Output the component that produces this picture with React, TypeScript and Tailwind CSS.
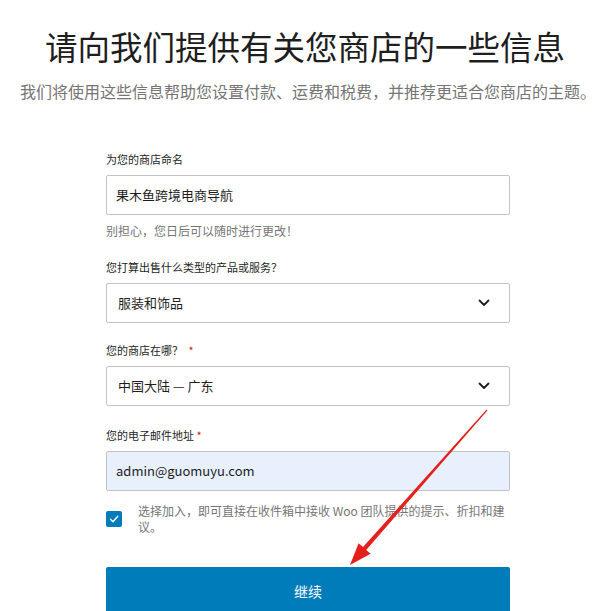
import React from "react";

const Chevron = () => (
  <svg width="12" height="8" viewBox="0 0 12 8" fill="none">
    <path d="M1.5 1.5 L6 6 L10.5 1.5" stroke="#1e1e1e" strokeWidth="1.8" strokeLinecap="round" strokeLinejoin="round" />
  </svg>
);

export default function App() {
  return (
    <div
      className="relative w-[608px] h-[611px] overflow-hidden bg-white"
      style={{ fontFamily: '"Noto Sans CJK SC", "Noto Sans", sans-serif' }}
    >
      <div className="flex flex-col items-center pt-[26px] pl-[8px]">
        <h1 className="text-[32.5px] leading-[40px] font-normal text-[#1e1e1e] whitespace-nowrap -ml-[6px]">
          请向我们提供有关您商店的一些信息
        </h1>
        <p className="mt-[13px] text-[16px] leading-[24px] text-[#757575] whitespace-nowrap">
          我们将使用这些信息帮助您设置付款、运费和税费，并推荐更适合您商店的主题。
        </p>
      </div>

      <div className="ml-[106px] w-[404px] mt-[48px] flex flex-col">
        <label className="text-[11px] leading-[16px] text-[#1e1e1e]">为您的商店命名</label>
        <div className="mt-[8px] h-[40px] border border-[#c3c3c3] rounded-[2px] flex items-center px-[9px] text-[13px] text-[#1e1e1e]">
          果木鱼跨境电商导航
        </div>
        <p className="mt-[8px] text-[12px] leading-[16px] text-[#757575]">别担心，您日后可以随时进行更改！</p>

        <label className="mt-[20px] text-[11px] leading-[16px] text-[#1e1e1e]">您打算出售什么类型的产品或服务？</label>
        <div className="mt-[8px] h-[40px] border border-[#c3c3c3] rounded-[2px] flex items-center justify-between pl-[11px] pr-[19px] text-[13px] text-[#1e1e1e]">
          <span>服装和饰品</span>
          <Chevron />
        </div>

        <label className="mt-[19px] text-[11px] leading-[16px] text-[#1e1e1e]">
          您的商店在哪？ <span className="text-[#cc1818] ml-[3px]">*</span>
        </label>
        <div className="mt-[8px] h-[40px] border border-[#c3c3c3] rounded-[2px] flex items-center justify-between pl-[11px] pr-[19px] text-[13px] text-[#1e1e1e]">
          <span>中国大陆 — 广东</span>
          <Chevron />
        </div>

        <label className="mt-[21px] text-[11px] leading-[16px] text-[#1e1e1e]">
          您的电子邮件地址 <span className="text-[#cc1818]">*</span>
        </label>
        <div className="mt-[8px] h-[40px] border border-[#c3c3c3] rounded-[2px] bg-[#e8f0fe] flex items-center px-[9px] text-[13px] text-[#1e1e1e]">
          admin@guomuyu.com
        </div>

        <div className="mt-[12px] flex items-center gap-[16px]">
          <div className="w-[16px] h-[16px] shrink-0 rounded-[2px] bg-[#007cba] flex items-center justify-center">
            <svg width="12" height="12" viewBox="0 0 12 12" fill="none">
              <path d="M2.5 6.3 L5 8.8 L9.8 3.2" stroke="white" strokeWidth="1.4" strokeLinecap="round" strokeLinejoin="round" />
            </svg>
          </div>
          <p className="text-[12px] leading-[16px] text-[#757575]">
            选择加入，即可直接在收件箱中接收 Woo 团队提供的提示、折扣和建议。
          </p>
        </div>

        <button className="mt-[32px] h-[48px] w-full bg-[#007cba] rounded-[2px] text-white text-[14px] flex items-center justify-center">
          继续
        </button>
      </div>

      <svg className="absolute left-0 top-0 pointer-events-none" width="608" height="611" viewBox="0 0 608 611">
        <polygon
          points="487.4,410.4 366.2,550.0 370.6,553.8 350,565 358.6,543.2 363.0,547.0 486.6,409.6"
          fill="#e5201c"
        />
      </svg>
    </div>
  );
}
